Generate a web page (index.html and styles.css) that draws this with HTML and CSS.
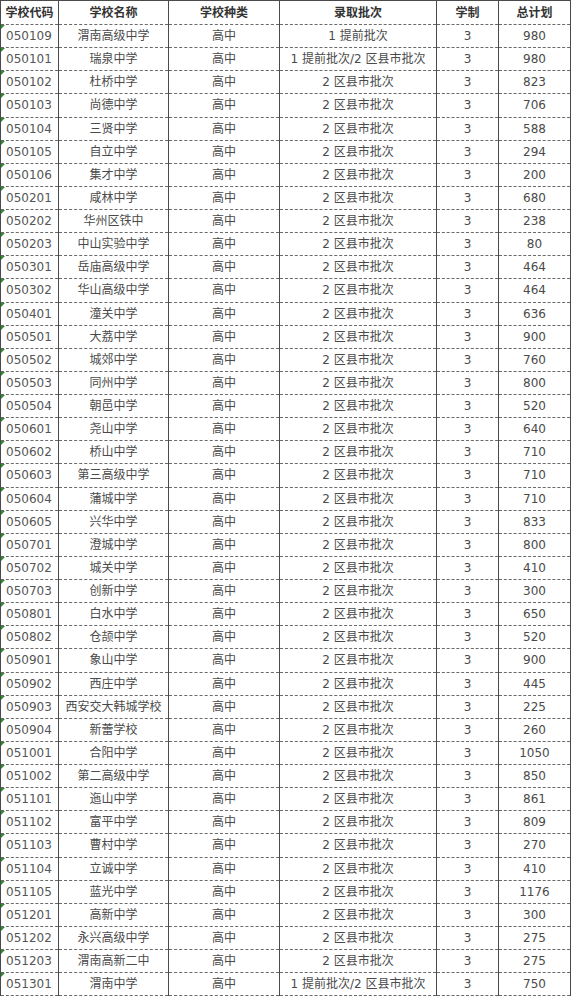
FILE: index.html
```html
<!DOCTYPE html>
<html lang="zh-CN">
<head>
<meta charset="utf-8">
<title>学校招生计划</title>
<link rel="stylesheet" href="styles.css">
</head>
<body>
<table class="plan">
  <colgroup>
    <col class="c-code"><col class="c-name"><col class="c-type"><col class="c-batch"><col class="c-years"><col class="c-total">
  </colgroup>
  <thead>
    <tr class="head"><th>学校代码</th><th>学校名称</th><th>学校种类</th><th>录取批次</th><th>学制</th><th>总计划</th></tr>
  </thead>
  <tbody>
    <tr><td class="code">050109</td><td>渭南高级中学</td><td>高中</td><td>1 提前批次</td><td>3</td><td>980</td></tr>
    <tr><td class="code">050101</td><td>瑞泉中学</td><td>高中</td><td>1 提前批次/2 区县市批次</td><td>3</td><td>980</td></tr>
    <tr><td class="code">050102</td><td>杜桥中学</td><td>高中</td><td>2 区县市批次</td><td>3</td><td>823</td></tr>
    <tr><td class="code">050103</td><td>尚德中学</td><td>高中</td><td>2 区县市批次</td><td>3</td><td>706</td></tr>
    <tr><td class="code">050104</td><td>三贤中学</td><td>高中</td><td>2 区县市批次</td><td>3</td><td>588</td></tr>
    <tr><td class="code">050105</td><td>自立中学</td><td>高中</td><td>2 区县市批次</td><td>3</td><td>294</td></tr>
    <tr><td class="code">050106</td><td>集才中学</td><td>高中</td><td>2 区县市批次</td><td>3</td><td>200</td></tr>
    <tr><td class="code">050201</td><td>咸林中学</td><td>高中</td><td>2 区县市批次</td><td>3</td><td>680</td></tr>
    <tr><td class="code">050202</td><td>华州区铁中</td><td>高中</td><td>2 区县市批次</td><td>3</td><td>238</td></tr>
    <tr><td class="code">050203</td><td>中山实验中学</td><td>高中</td><td>2 区县市批次</td><td>3</td><td>80</td></tr>
    <tr><td class="code">050301</td><td>岳庙高级中学</td><td>高中</td><td>2 区县市批次</td><td>3</td><td>464</td></tr>
    <tr><td class="code">050302</td><td>华山高级中学</td><td>高中</td><td>2 区县市批次</td><td>3</td><td>464</td></tr>
    <tr><td class="code">050401</td><td>潼关中学</td><td>高中</td><td>2 区县市批次</td><td>3</td><td>636</td></tr>
    <tr><td class="code">050501</td><td>大荔中学</td><td>高中</td><td>2 区县市批次</td><td>3</td><td>900</td></tr>
    <tr><td class="code">050502</td><td>城郊中学</td><td>高中</td><td>2 区县市批次</td><td>3</td><td>760</td></tr>
    <tr><td class="code">050503</td><td>同州中学</td><td>高中</td><td>2 区县市批次</td><td>3</td><td>800</td></tr>
    <tr><td class="code">050504</td><td>朝邑中学</td><td>高中</td><td>2 区县市批次</td><td>3</td><td>520</td></tr>
    <tr><td class="code">050601</td><td>尧山中学</td><td>高中</td><td>2 区县市批次</td><td>3</td><td>640</td></tr>
    <tr><td class="code">050602</td><td>桥山中学</td><td>高中</td><td>2 区县市批次</td><td>3</td><td>710</td></tr>
    <tr><td class="code">050603</td><td>第三高级中学</td><td>高中</td><td>2 区县市批次</td><td>3</td><td>710</td></tr>
    <tr><td class="code">050604</td><td>蒲城中学</td><td>高中</td><td>2 区县市批次</td><td>3</td><td>710</td></tr>
    <tr><td class="code">050605</td><td>兴华中学</td><td>高中</td><td>2 区县市批次</td><td>3</td><td>833</td></tr>
    <tr><td class="code">050701</td><td>澄城中学</td><td>高中</td><td>2 区县市批次</td><td>3</td><td>800</td></tr>
    <tr><td class="code">050702</td><td>城关中学</td><td>高中</td><td>2 区县市批次</td><td>3</td><td>410</td></tr>
    <tr><td class="code">050703</td><td>创新中学</td><td>高中</td><td>2 区县市批次</td><td>3</td><td>300</td></tr>
    <tr><td class="code">050801</td><td>白水中学</td><td>高中</td><td>2 区县市批次</td><td>3</td><td>650</td></tr>
    <tr><td class="code">050802</td><td>仓颉中学</td><td>高中</td><td>2 区县市批次</td><td>3</td><td>520</td></tr>
    <tr><td class="code">050901</td><td>象山中学</td><td>高中</td><td>2 区县市批次</td><td>3</td><td>900</td></tr>
    <tr><td class="code">050902</td><td>西庄中学</td><td>高中</td><td>2 区县市批次</td><td>3</td><td>445</td></tr>
    <tr><td class="code">050903</td><td>西安交大韩城学校</td><td>高中</td><td>2 区县市批次</td><td>3</td><td>225</td></tr>
    <tr><td class="code">050904</td><td>新蕾学校</td><td>高中</td><td>2 区县市批次</td><td>3</td><td>260</td></tr>
    <tr><td class="code">051001</td><td>合阳中学</td><td>高中</td><td>2 区县市批次</td><td>3</td><td>1050</td></tr>
    <tr><td class="code">051002</td><td>第二高级中学</td><td>高中</td><td>2 区县市批次</td><td>3</td><td>850</td></tr>
    <tr><td class="code">051101</td><td>迤山中学</td><td>高中</td><td>2 区县市批次</td><td>3</td><td>861</td></tr>
    <tr><td class="code">051102</td><td>富平中学</td><td>高中</td><td>2 区县市批次</td><td>3</td><td>809</td></tr>
    <tr><td class="code">051103</td><td>曹村中学</td><td>高中</td><td>2 区县市批次</td><td>3</td><td>270</td></tr>
    <tr><td class="code">051104</td><td>立诚中学</td><td>高中</td><td>2 区县市批次</td><td>3</td><td>410</td></tr>
    <tr><td class="code">051105</td><td>蓝光中学</td><td>高中</td><td>2 区县市批次</td><td>3</td><td>1176</td></tr>
    <tr><td class="code">051201</td><td>高新中学</td><td>高中</td><td>2 区县市批次</td><td>3</td><td>300</td></tr>
    <tr><td class="code">051202</td><td>永兴高级中学</td><td>高中</td><td>2 区县市批次</td><td>3</td><td>275</td></tr>
    <tr><td class="code">051203</td><td>渭南高新二中</td><td>高中</td><td>2 区县市批次</td><td>3</td><td>275</td></tr>
    <tr><td class="code">051301</td><td>渭南中学</td><td>高中</td><td>1 提前批次/2 区县市批次</td><td>3</td><td>750</td></tr>
  </tbody>
</table>
</body>
</html>
```

FILE: styles.css
```css
html, body {
  margin: 0;
  padding: 0;
  background: #ffffff;
}

.plan {
  border-collapse: collapse;
  table-layout: fixed;
  width: 571px;
  font-family: "DejaVu Sans", "Noto Sans CJK SC", sans-serif;
  font-size: 12px;
  color: #4a4a4a;
}

.c-code { width: 58px; }
.c-name { width: 110px; }
.c-type { width: 111px; }
.c-batch { width: 157px; }
.c-years { width: 62px; }
.c-total { width: 72px; }

.plan th,
.plan td {
  padding: 0;
  text-align: center;
  vertical-align: middle;
  white-space: nowrap;
  overflow: hidden;
  border-left: 1px solid #4a4a4a;
  border-right: 1px solid #4a4a4a;
  border-top: 1px dashed #6a6a6a;
  border-bottom: 1px dashed #6a6a6a;
  line-height: 14px;
}

.plan thead th {
  border-top: 1px solid #4a4a4a;
  font-weight: bold;
  color: #333333;
}

.head {
  height: 24px;
}

.plan tbody tr {
  height: 23.14px;
}

.plan td.code {
  position: relative;
  text-align: left;
  padding-left: 5px;
  color: #555555;
}

.plan td.code::before {
  content: "";
  position: absolute;
  left: 0;
  top: 0;
  width: 0;
  height: 0;
  border-top: 4px solid #2e8b2e;
  border-right: 4px solid transparent;
}
```
